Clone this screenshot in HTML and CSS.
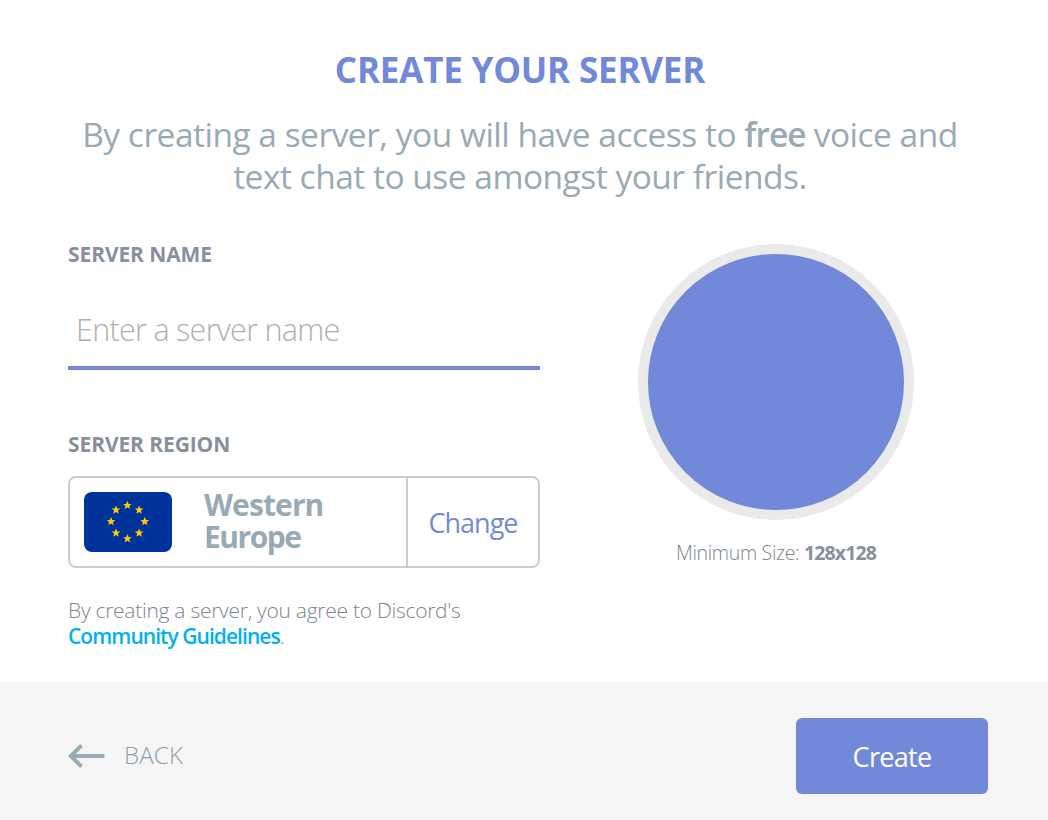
FILE: index.html
```html
<!DOCTYPE html>
<html lang="en">
<head>
<meta charset="utf-8">
<title>Create your server</title>
<link rel="stylesheet" href="styles.css">
</head>
<body>
<form class="dialog">
  <main class="content">
    <header class="intro">
      <h1 class="title">CREATE YOUR SERVER</h1>
      <p class="subtitle">By creating a server, you will have access to <strong class="free">free</strong> voice and<br>text chat to use amongst your friends.</p>
    </header>
    <div class="columns">
      <section class="fields">
        <label class="label" for="name">SERVER NAME</label>
        <input class="name-input" id="name" type="text" placeholder="Enter a server name">
        <div class="label label-region">SERVER REGION</div>
        <div class="region">
          <div class="region-current">
            <svg class="flag" viewBox="0 0 88 60" width="88" height="60">
              <defs><path id="star" d="M0-4.6 1.25-1.5 4.4-1.4 1.9.6 2.7 3.7 0 1.9-2.7 3.7-1.9.6-4.4-1.4-1.25-1.5Z"/></defs>
              <rect width="88" height="60" rx="8" fill="#039"/>
              <g fill="#fc0">
                <use href="#star" x="43.4" y="13.4"/><use href="#star" x="55.1" y="18"/>
                <use href="#star" x="60.8" y="29.6"/><use href="#star" x="55.1" y="41"/>
                <use href="#star" x="43.4" y="46.7"/><use href="#star" x="32" y="41"/>
                <use href="#star" x="27" y="29.6"/><use href="#star" x="32" y="18"/>
              </g>
            </svg>
            <div class="region-name"><div>Western</div><div class="region-second">Europe</div></div>
          </div>
          <button class="change" type="button">Change</button>
        </div>
        <p class="terms">By creating a server, you agree to Discord's<br><a class="link" href="#">Community Guidelines</a>.</p>
      </section>
      <aside class="avatar">
        <div class="avatar-circle"></div>
        <p class="avatar-hint">Minimum Size: <strong class="size">128x128</strong></p>
      </aside>
    </div>
  </main>
  <footer class="footer">
    <a class="back" href="#">
      <svg width="37" height="26" viewBox="0 0 37 26" fill="none" stroke="#99aab5" stroke-width="4"><path d="M36.4 13H3M13.5 2.4 2.8 13l10.7 10.6"/></svg>
      <span class="back-text">BACK</span>
    </a>
    <button class="create" type="button">Create</button>
  </footer>
</form>
</body>
</html>
```
FILE: styles.css
```css
* { box-sizing: border-box; }
body {
  margin: 0;
  background: #fff;
  font-family: "Open Sans", "Noto Sans", sans-serif;
  color: #87909c;
}
h1, p { margin: 0; }
a { text-decoration: none; }
button { font: inherit; border: 0; background: none; padding: 0; cursor: pointer; }
.dialog { display: flex; flex-direction: column; height: 820px; width: 1048px; }
.content { flex: 1; padding: 49px 60px 0 68px; }
.intro { text-align: center; margin-left: -16px; }
.title { font-size: 35px; line-height: 42px; font-weight: 700; color: #7289da; letter-spacing: -0.2px; white-space: nowrap; }
.subtitle { margin-top: 22px; font-size: 33.5px; line-height: 42px; color: #99aab5; letter-spacing: -0.5px; white-space: nowrap; }
.free { font-weight: 600; letter-spacing: -1px; }
.columns { display: flex; margin-top: 47px; }
.fields { width: 472px; display: flex; flex-direction: column; }
.label { margin-top: -1px; font-size: 21px; line-height: 22px; font-weight: 700; letter-spacing: -0.1px; white-space: nowrap; }
.name-input {
  margin-top: 27px; height: 78px; padding: 0 8px 1px; border: 0; border-bottom: 4px solid #7289da;
  background: none; outline: none; font: 300 30.5px "Open Sans", sans-serif; letter-spacing: -0.7px;
}
.name-input::placeholder { color: #adafb2; opacity: 1; }
.label-region { margin-top: 63px; }
.region { display: flex; height: 92px; margin-top: 21px; border: 2px solid #ccc; border-radius: 8px; }
.region-current { display: flex; width: 338px; padding: 14px; gap: 32px; border-right: 2px solid #ccc; }
.flag { flex: none; }
.region-name { margin-top: -3px; font-size: 30px; line-height: 32px; font-weight: 700; color: #99aab5; letter-spacing: -0.9px; }
.region-second { letter-spacing: -1.5px; }
.change { flex: 1; font-size: 27px; color: #7289da; letter-spacing: -1px; }
.terms { margin-top: 29px; font-size: 21px; line-height: 26px; font-weight: 300; color: #7b8491; letter-spacing: -0.27px; white-space: nowrap; }
.link { font-weight: 600; color: #00b0f4; letter-spacing: -0.95px; }
.avatar { flex: 1; display: flex; flex-direction: column; align-items: center; margin-left: 24px; }
.avatar-circle { width: 276px; height: 276px; border-radius: 50%; border: 10px solid #eaeaea; background: #7289da; }
.avatar-hint { margin-top: 20px; font-size: 19.5px; line-height: 26px; font-weight: 300; color: #7b8491; letter-spacing: -0.33px; white-space: nowrap; }
.size { font-weight: 700; color: #87909c; letter-spacing: -0.9px; }
.footer { height: 138px; padding: 10px 60px 0 68px; background: #f5f5f5; display: flex; justify-content: space-between; align-items: center; }
.back { display: flex; align-items: center; gap: 19px; color: #8d9faa; font-size: 24px; font-weight: 300; line-height: 30px; letter-spacing: 0.2px; }
.back-text { padding-bottom: 2px; }
.create { width: 192px; height: 76px; border-radius: 6px; background: #7289da; color: #fff; font-size: 27px; letter-spacing: -0.7px; }
```
